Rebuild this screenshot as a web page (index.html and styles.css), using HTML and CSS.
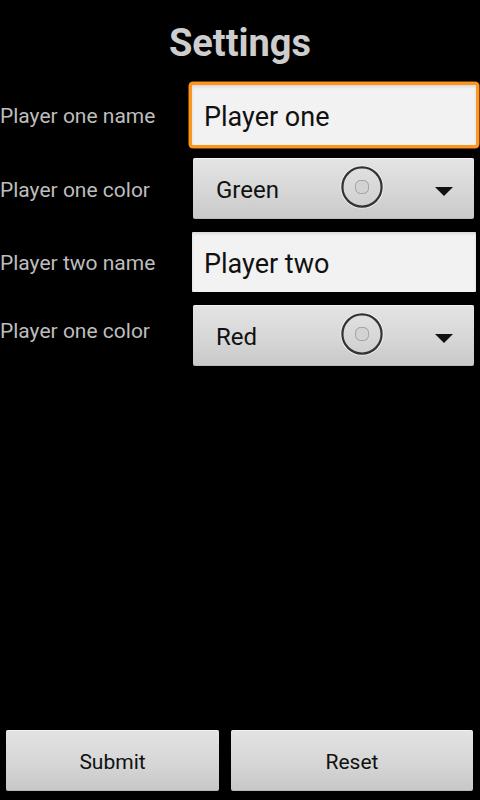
FILE: index.html
```html
<!DOCTYPE html>
<html>
<head>
<meta charset="utf-8">
<link rel="stylesheet" href="styles.css">
</head>
<body>
<div class="screen">
  <h1 class="title">Settings</h1>
  <div class="form">
    <div class="row">
      <div class="label">Player one name</div>
      <div class="field focused"><span class="field-text">Player one</span></div>
    </div>
    <div class="row">
      <div class="label">Player one color</div>
      <div class="spinner">
        <span class="spinner-text">Green</span>
        <svg class="knob" width="44" height="44" viewBox="0 0 44 44">
          <circle cx="22" cy="22" r="21" fill="none" stroke="#f4f4f4" stroke-width="1.2"/>
          <circle cx="22" cy="22" r="19.6" fill="none" stroke="#333" stroke-width="2.2"/>
          <rect x="15.5" y="15.5" width="13" height="13" rx="5" fill="#d2d2d2" stroke="#a0a0a0" stroke-width="1"/>
        </svg>
        <svg class="caret" width="18" height="9" viewBox="0 0 18 9">
          <polygon points="0,0 18,0 9,9" fill="#111"/>
        </svg>
      </div>
    </div>
    <div class="row">
      <div class="label">Player two name</div>
      <div class="field"><span class="field-text">Player two</span></div>
    </div>
    <div class="row">
      <div class="label label-raised">Player one color</div>
      <div class="spinner">
        <span class="spinner-text">Red</span>
        <svg class="knob" width="44" height="44" viewBox="0 0 44 44">
          <circle cx="22" cy="22" r="21" fill="none" stroke="#f4f4f4" stroke-width="1.2"/>
          <circle cx="22" cy="22" r="19.6" fill="none" stroke="#333" stroke-width="2.2"/>
          <rect x="15.5" y="15.5" width="13" height="13" rx="5" fill="#d2d2d2" stroke="#a0a0a0" stroke-width="1"/>
        </svg>
        <svg class="caret" width="18" height="9" viewBox="0 0 18 9">
          <polygon points="0,0 18,0 9,9" fill="#111"/>
        </svg>
      </div>
    </div>
  </div>
  <div class="actions">
    <button class="btn btn-submit">Submit</button>
    <button class="btn btn-reset">Reset</button>
  </div>
</div>
</body>
</html>
```

FILE: styles.css
```css
html, body {
  margin: 0;
  padding: 0;
  background: #000;
}

body {
  font-family: Roboto, "Noto Sans", "DejaVu Sans", sans-serif;
}

.screen {
  width: 480px;
  height: 800px;
  display: flex;
  flex-direction: column;
  background: #000;
}

.title {
  margin: 0;
  padding: 21px 0 17px;
  height: 44px;
  line-height: 44px;
  font-size: 38px;
  font-weight: 700;
  color: #cdcdcd;
  text-align: center;
}

.form {
  display: flex;
  flex-direction: column;
  gap: 10px;
}

.row {
  display: flex;
  align-items: center;
}

.label {
  flex: 0 0 189px;
  font-size: 21px;
  line-height: 26px;
  color: #bdbdbd;
  white-space: nowrap;
  padding-top: 2px;
}

.label-raised {
  padding-top: 0;
  padding-bottom: 10px;
}

.field {
  box-sizing: border-box;
  width: 290px;
  height: 66px;
  border: 3px solid #000;
  border-radius: 4px;
  background: #f2f2f2;
  box-shadow: inset 0 2px 3px rgba(0, 0, 0, 0.10);
  display: flex;
  align-items: center;
  padding-left: 12px;
}

.field.focused {
  border-color: #fd961f;
  box-shadow: inset 0 2px 3px rgba(0, 0, 0, 0.10), 0 0 0 0.5px #f58a10;
}

.field-text {
  font-size: 27px;
  color: #111;
  padding-top: 3px;
}

.spinner {
  box-sizing: border-box;
  margin-left: 4px;
  width: 281px;
  height: 61px;
  border-radius: 2px;
  background: linear-gradient(to bottom, #e4e4e4 0%, #d8d8d8 50%, #c9c9c9 100%);
  box-shadow: inset 0 1px 0 rgba(255, 255, 255, 0.5), inset 0 -1px 0 rgba(0, 0, 0, 0.08);
  display: flex;
  align-items: center;
  padding: 0 21px 0 23px;
}

.spinner-text {
  flex: 0 0 124px;
  font-size: 24px;
  color: #111;
  padding-top: 3px;
}

.knob {
  flex: 0 0 44px;
  margin-bottom: 3px;
}

.caret {
  margin-left: auto;
  margin-top: 5px;
}

.actions {
  margin-top: auto;
  display: flex;
  gap: 12px;
  padding: 0 7px 9px 6px;
}

.btn {
  height: 61px;
  border: none;
  border-radius: 2px;
  background: linear-gradient(to bottom, #e3e3e3 0%, #d6d6d6 55%, #c7c7c7 100%);
  box-shadow: inset 0 1px 0 rgba(255, 255, 255, 0.5), inset 0 -1px 0 rgba(0, 0, 0, 0.08);
  font-family: Roboto, "Noto Sans", "DejaVu Sans", sans-serif;
  font-size: 21px;
  color: #111;
  padding: 2px 0 0;
}

.btn-submit {
  flex: 0 0 213px;
}

.btn-reset {
  flex: 0 0 242px;
}
```
